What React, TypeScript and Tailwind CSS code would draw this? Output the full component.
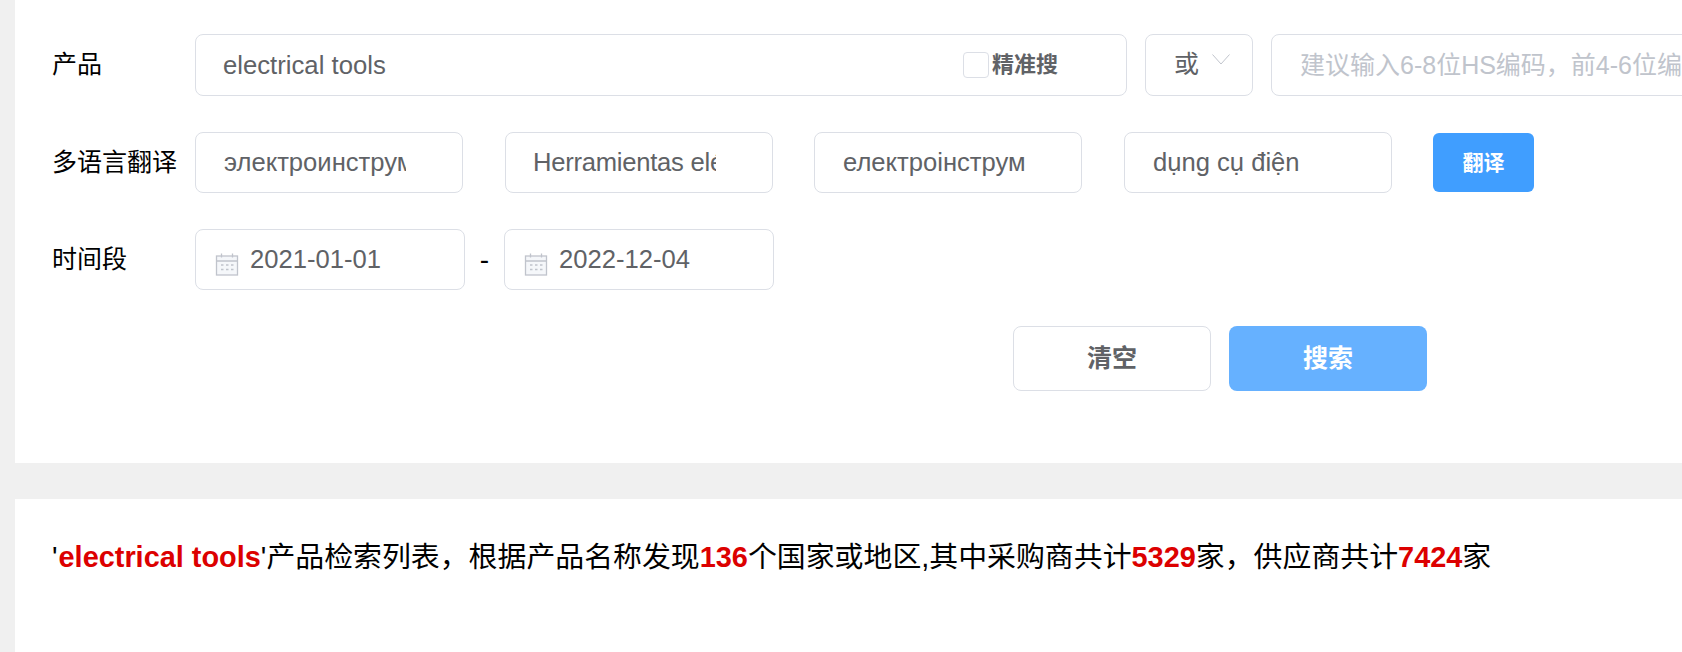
const font = "font-['Liberation_Sans','Noto_Sans_CJK_SC',sans-serif]";

const TextInput = ({ value, className }: { value: string; className: string }) => (
  <input
    readOnly
    value={value}
    className={`${className} w-[268px] h-[61px] border border-[#dcdfe6] rounded-lg pr-14 text-[25.6px] text-[#606266] bg-white outline-none`}
  />
);

const CalendarIcon = () => (
  <svg viewBox="0 0 24 24" className="w-6 h-6 absolute left-5 top-[23px]" fill="none" stroke="#c0c4cc" strokeWidth="1.3">
    <rect x="1.5" y="4" width="21" height="19" fill="#f5f7fa" />
    <path d="M1.5 9h21M6.5 1.5v4M17.5 1.5v4" />
    <path d="M6 13h2.5M11 13h2.5M16 13h2.5M6 17.5h2.5M11 17.5h2.5M16 17.5h2.5" />
  </svg>
);

const DateInput = ({ value }: { value: string }) => (
  <div className="relative w-[270px] h-[61px]">
    <CalendarIcon />
    <input
      readOnly
      value={value}
      className="relative w-full h-full border border-[#dcdfe6] rounded-lg pl-[54px] pr-7 text-[25.6px] text-[#606266] bg-transparent outline-none"
    />
  </div>
);

const Row = ({ label, className, children }: { label: string; className: string; children: React.ReactNode }) => (
  <div className={`flex items-center ${className}`}>
    <div className="w-[143px] shrink-0 text-[25px] text-black">{label}</div>
    {children}
  </div>
);

export default function App() {
  return (
    <div className={`${font} w-[1682px] h-[652px] overflow-hidden bg-[#f0f0f0] pl-[15px]`}>
      {/* Search form */}
      <div className="bg-white h-[463px] pt-[34px] pl-[37px]">
        <Row label="产品" className="mb-9">
          <div className="relative w-[932px] h-[62px] shrink-0">
            <input
              readOnly
              value="electrical tools"
              className="w-full h-full border border-[#dcdfe6] rounded-lg pl-[27px] text-[25.7px] text-[#606266] bg-white outline-none"
            />
            <div className="absolute left-[768px] top-[14px] flex items-center gap-[3px]">
              <span className="w-[26px] h-[26px] border border-[#dcdfe6] rounded-[4px] bg-white" />
              <span className="text-[22px] font-semibold text-[#606266]">精准搜</span>
            </div>
          </div>
          <div className="relative w-[108px] h-[62px] ml-[18px] shrink-0 border border-[#dcdfe6] rounded-lg flex items-center pl-[28px] text-[25px] text-[#606266]">
            或
            <svg viewBox="0 0 18 11" className="absolute left-[66px] top-[19px] w-[18px] h-[11px]" fill="none" stroke="#c0c4cc" strokeWidth="1">
              <path d="M0.5 0.5 9 10 17.5 0.5" />
            </svg>
          </div>
          <input
            readOnly
            placeholder="建议输入6-8位HS编码，前4-6位编码可能不准确"
            className="w-[700px] h-[62px] ml-[18px] shrink-0 border border-[#dcdfe6] rounded-lg pl-7 text-[25px] placeholder:text-[#c0c4cc] bg-white outline-none"
          />
        </Row>
        <Row label="多语言翻译" className="mb-9">
          <TextInput value="электроинструмент" className="shrink-0 pl-7" />
          <div className="ml-[42px]"><TextInput value="Herramientas eléctricas" className="pl-[27px] tracking-[-0.25px]" /></div>
          <div className="ml-[41px]"><TextInput value="електроінструмент" className="pl-7" /></div>
          <div className="ml-[42px]"><TextInput value="dụng cụ điện" className="pl-7" /></div>
          <button className="w-[101px] h-[59px] ml-[41px] rounded-md bg-[#409eff] text-white text-[21px] font-bold">翻译</button>
        </Row>
        <Row label="时间段" className="mb-9">
          <DateInput value="2021-01-01" />
          <span className="w-[39px] text-center text-[28px] text-black">-</span>
          <DateInput value="2022-12-04" />
        </Row>
        <div className="flex gap-[18px] ml-[961px]">
          <button className="w-[198px] h-[65px] border border-[#dcdfe6] rounded-lg bg-white text-[25px] font-bold text-[#606266]">清空</button>
          <button className="w-[198px] h-[65px] rounded-lg bg-[#66b1ff] text-[25px] font-bold text-white">搜索</button>
        </div>
      </div>

      {/* Result summary */}
      <div className="bg-white mt-9 h-[153px] pt-[37px] pl-[37px] text-[28.9px] text-black">
        '<b className="ml-px text-[#dc0000]">electrical tools</b>'产品检索列表，根据产品名称发现<b className="text-[#dc0000]">136</b>个国家或地区,其中采购商共计<b className="text-[#dc0000]">5329</b>家，供应商共计<b className="text-[#dc0000]">7424</b>家
      </div>
    </div>
  );
}
